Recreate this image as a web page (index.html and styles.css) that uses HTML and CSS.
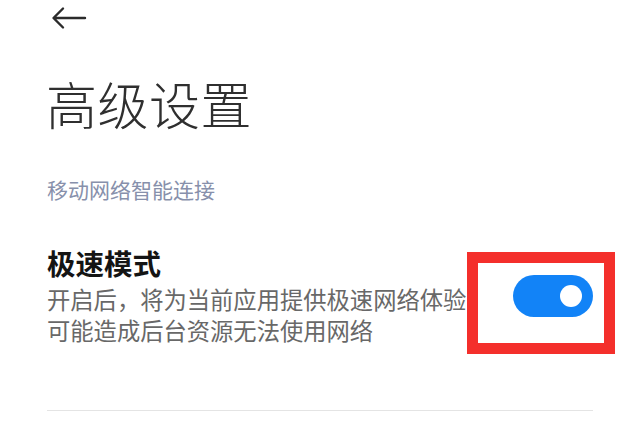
FILE: index.html
```html
<!DOCTYPE html>
<html lang="zh-CN">
<head>
<meta charset="utf-8">
<title>高级设置</title>
<link rel="stylesheet" href="styles.css">
</head>
<body>
<div class="page">
  <div class="topbar">
    <svg class="back" width="36" height="24" viewBox="0 0 36 24" aria-label="返回">
      <path d="M34 12 H3 M12 2.5 L2.5 12 L12 21.5" fill="none" stroke="#2b2b2b" stroke-width="2.4" stroke-linecap="round" stroke-linejoin="round"/>
    </svg>
  </div>
  <h1 class="title">高级设置</h1>
  <div class="section-label">移动网络智能连接</div>
  <div class="row">
    <div class="row-text">
      <div class="row-title">极速模式</div>
      <div class="row-desc">开启后，将为当前应用提供极速网络体验<br>可能造成后台资源无法使用网络</div>
    </div>
    <div class="switch-wrap">
      <div class="switch"><span class="knob"></span></div>
      <div class="highlight"></div>
    </div>
  </div>
  <div class="divider"></div>
</div>
</body>
</html>
```

FILE: styles.css
```css
html, body {
  margin: 0;
  padding: 0;
  background: #ffffff;
}
body {
  font-family: "Noto Sans CJK SC", "Noto Sans", sans-serif;
  overflow: hidden;
}
.page {
  width: 640px;
  height: 438px;
  padding: 0 47px;
  box-sizing: border-box;
}
.topbar {
  height: 36px;
  padding-left: 4px;
  padding-top: 6px;
  box-sizing: border-box;
}
.back {
  display: block;
}
.title {
  margin: 37px 0 0 -1px;
  font-size: 51px;
  line-height: 60px;
  font-weight: 300;
  color: #2f2f2f;
  letter-spacing: 0.5px;
}
.section-label {
  margin-top: 42px;
  font-size: 21px;
  line-height: 28px;
  color: #8790ab;
}
.row {
  margin-top: 42px;
  display: flex;
  align-items: center;
  justify-content: space-between;
}
.row-title {
  font-size: 28.5px;
  line-height: 36px;
  font-weight: 700;
  color: #141414;
}
.row-desc {
  margin-top: 3px;
  font-size: 23.3px;
  line-height: 31px;
  color: #686868;
}
.switch-wrap {
  position: relative;
  margin-top: 0;
}
.switch {
  width: 80px;
  height: 42px;
  border-radius: 21px;
  background: #1283f7;
  display: flex;
  align-items: center;
  justify-content: flex-end;
  padding-right: 11px;
  box-sizing: border-box;
}
.knob {
  width: 22px;
  height: 22px;
  border-radius: 50%;
  background: #ffffff;
}
.highlight {
  position: absolute;
  left: -46px;
  top: -23px;
  right: -22px;
  bottom: -37px;
  border: 11px solid #f42f2b;
}
.divider {
  margin-top: 64px;
  height: 1px;
  background: #e4e4e4;
}
```
